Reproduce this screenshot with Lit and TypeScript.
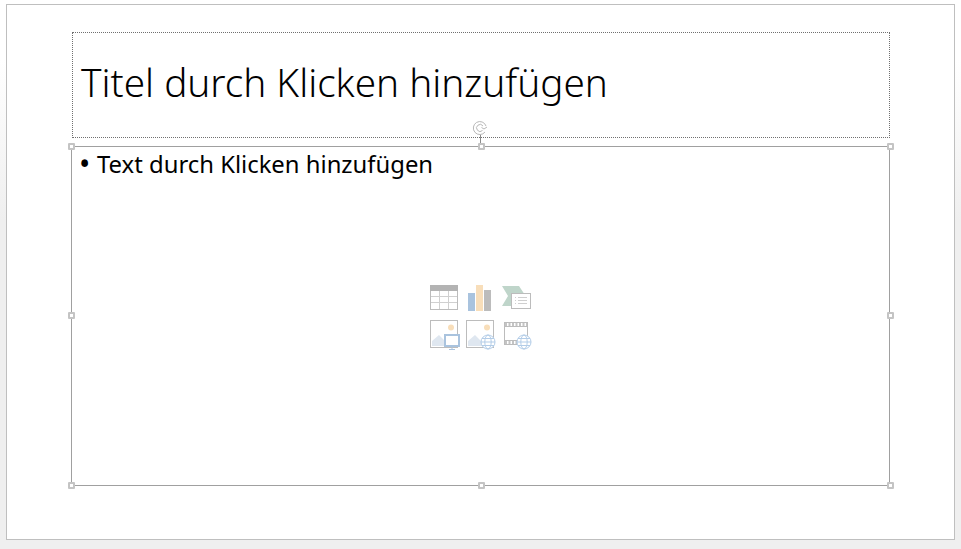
import { LitElement, html, css, svg } from "lit";
import { customElement } from "lit/decorators.js";

const G = "#bcbcbc";
const BL = "#a9c3de";
const LB = "#dfe7f0";
const OR = "#f8deba";

const globe = (x: number, y: number) => svg`
  <g fill="#fff" stroke="#b3cde8" stroke-width="1">
    <circle cx="${x}" cy="${y}" r="7"/>
    <ellipse cx="${x}" cy="${y}" rx="3.2" ry="7" fill="none"/>
    <path d="M${x - 7} ${y}h14M${x - 6} ${y - 3.5}h12M${x - 6} ${y + 3.5}h12" fill="none"/>
  </g>`;

const picture = () => svg`
  <rect x=".5" y=".5" width="27" height="27" fill="#fff" stroke="${G}"/>
  <circle cx="21" cy="7.500" r="3" fill="${OR}"/>
  <path d="M2 26V21l7-6 6 6 7 5z" fill="${LB}"/>`;

@customElement("app-root")
export class AppRoot extends LitElement {
  static styles = css`
    :host { display: block; width: 961px; height: 549px; overflow: hidden; box-sizing: border-box;
      padding: 4px 6px 0; background: linear-gradient(#ffffff 0, #ffffff 60px, #efefef 220px); }
    .slide { box-sizing: border-box; width: 949px; height: 536px; background: #fff;
      border: 1px solid #bfbfbf; padding: 27px 64px 0 64px; display: flex; flex-direction: column; align-items: flex-start; }
    .title { box-sizing: border-box; width: 818px; height: 106px; margin-left: 1px; border: 1px dotted #707070;
      display: flex; align-items: center; padding: 0 0 6px 8px;
      font: 300 38.7px "Noto Sans", sans-serif; color: #000; white-space: nowrap; }
    .content { position: relative; box-sizing: border-box; width: 819px; height: 340px; margin-top: 8px;
      border: 1px solid #a0a0a0; padding: 4px 0 0 7px; display: grid; grid-template-rows: auto 1fr; }
    .bullet { display: flex; font: 400 23.85px/26px "Noto Sans", sans-serif; color: #000; white-space: nowrap; }
    .dot { width: 18px; font-size: 30px; }
    .icons { display: flex; align-items: center; justify-content: center; padding: 0 4px 28px 0; }
    .icons svg { display: block; }
    .h { position: absolute; box-sizing: border-box; width: 7px; height: 7px; background: #fff;
      border: 2px solid #c4c4c4; border-radius: 1px; }
    .l { left: -4px; } .c { left: calc(50% - 3px); } .r { left: calc(100% - 2px); }
    .t { top: -4px; } .m { top: calc(50% - 4px); } .b { top: calc(100% - 3px); }
    .stem { position: absolute; left: calc(50% - 1px); top: -12px; width: 1px; height: 9px; background: #8c8c8c; }
    .rot { position: absolute; left: calc(50% - 9px); top: -27px; display: block; }
  `;

  render() {
    const handles = ["t l", "t c", "t r", "m l", "m r", "b l", "b c", "b r"];
    return html`<div class="slide">
      <div class="title">Titel durch Klicken hinzufügen</div>
      <div class="content">
        <div class="bullet"><span class="dot">•</span><span>Text durch Klicken hinzufügen</span></div>
        <div class="icons">
          <svg width="104" height="66" viewBox="0 0 104 66">
            <!-- table -->
            <rect x=".5" y="1.500" width="27" height="24" fill="#fff" stroke="${G}"/>
            <rect x="0" y="1" width="28" height="6" fill="#b3b3b3"/>
            <path d="M9.500 7v18M18.500 7v18M1 12.500h26M1 18.500h26" stroke="#d0d0d0" fill="none"/>
            <!-- chart -->
            <rect x="38" y="9" width="7" height="18" fill="${BL}"/>
            <rect x="46" y="1" width="7" height="26" fill="${OR}"/>
            <rect x="54" y="6" width="7" height="21" fill="#bcbcbc"/>
            <!-- smartart -->
            <path d="M72 2h17l6 9-6 3H81v8h-9l6-10z" fill="#bfd5ca"/>
            <rect x="81.500" y="9.500" width="19" height="15" fill="#fff" stroke="${G}"/>
            <path d="M85 13.500h1M88 13.500h9M85 16.500h1M88 16.500h9M85 19.500h1M88 19.500h9" stroke="#cfcfcf" fill="none"/>
            <!-- picture + monitor -->
            <g transform="translate(0 36)">
              ${picture()}
              <rect x="15" y="15" width="14" height="11" fill="#fff" stroke="${BL}" stroke-width="2"/>
              <path d="M22 27v2M19 29.500h6" stroke="${BL}" fill="none"/>
            </g>
            <!-- online picture -->
            <g transform="translate(36 36)">${picture()}${globe(22, 22)}</g>
            <!-- video -->
            <g transform="translate(74 38)">
              <rect x=".5" y=".5" width="23" height="22" fill="#fff" stroke="${G}"/>
              <path d="M1 2.500h22M1 20.500h22" stroke="#c4c4c4" stroke-width="3" stroke-dasharray="2 1.500" fill="none"/>
              <path d="M1 4.500h22M1 18.500h22" stroke="${G}" fill="none"/>
              ${globe(20, 20)}
            </g>
          </svg>
        </div>
        <div class="stem"></div>
        <svg class="rot" width="16" height="16" viewBox="0 0 16 16" fill="none" stroke="#b8b8b8">
          <path d="M13 12A6.500 6.500 0 1 1 14 6"/>
          <path d="M10.500 10.500A3.500 3.500 0 1 1 11 6"/>
          <path d="M9.500 7.500l2.500 1.500 3-2"/>
        </svg>
        ${handles.map((c) => html`<div class="h ${c}"></div>`)}
      </div>
    </div>`;
  }
}
